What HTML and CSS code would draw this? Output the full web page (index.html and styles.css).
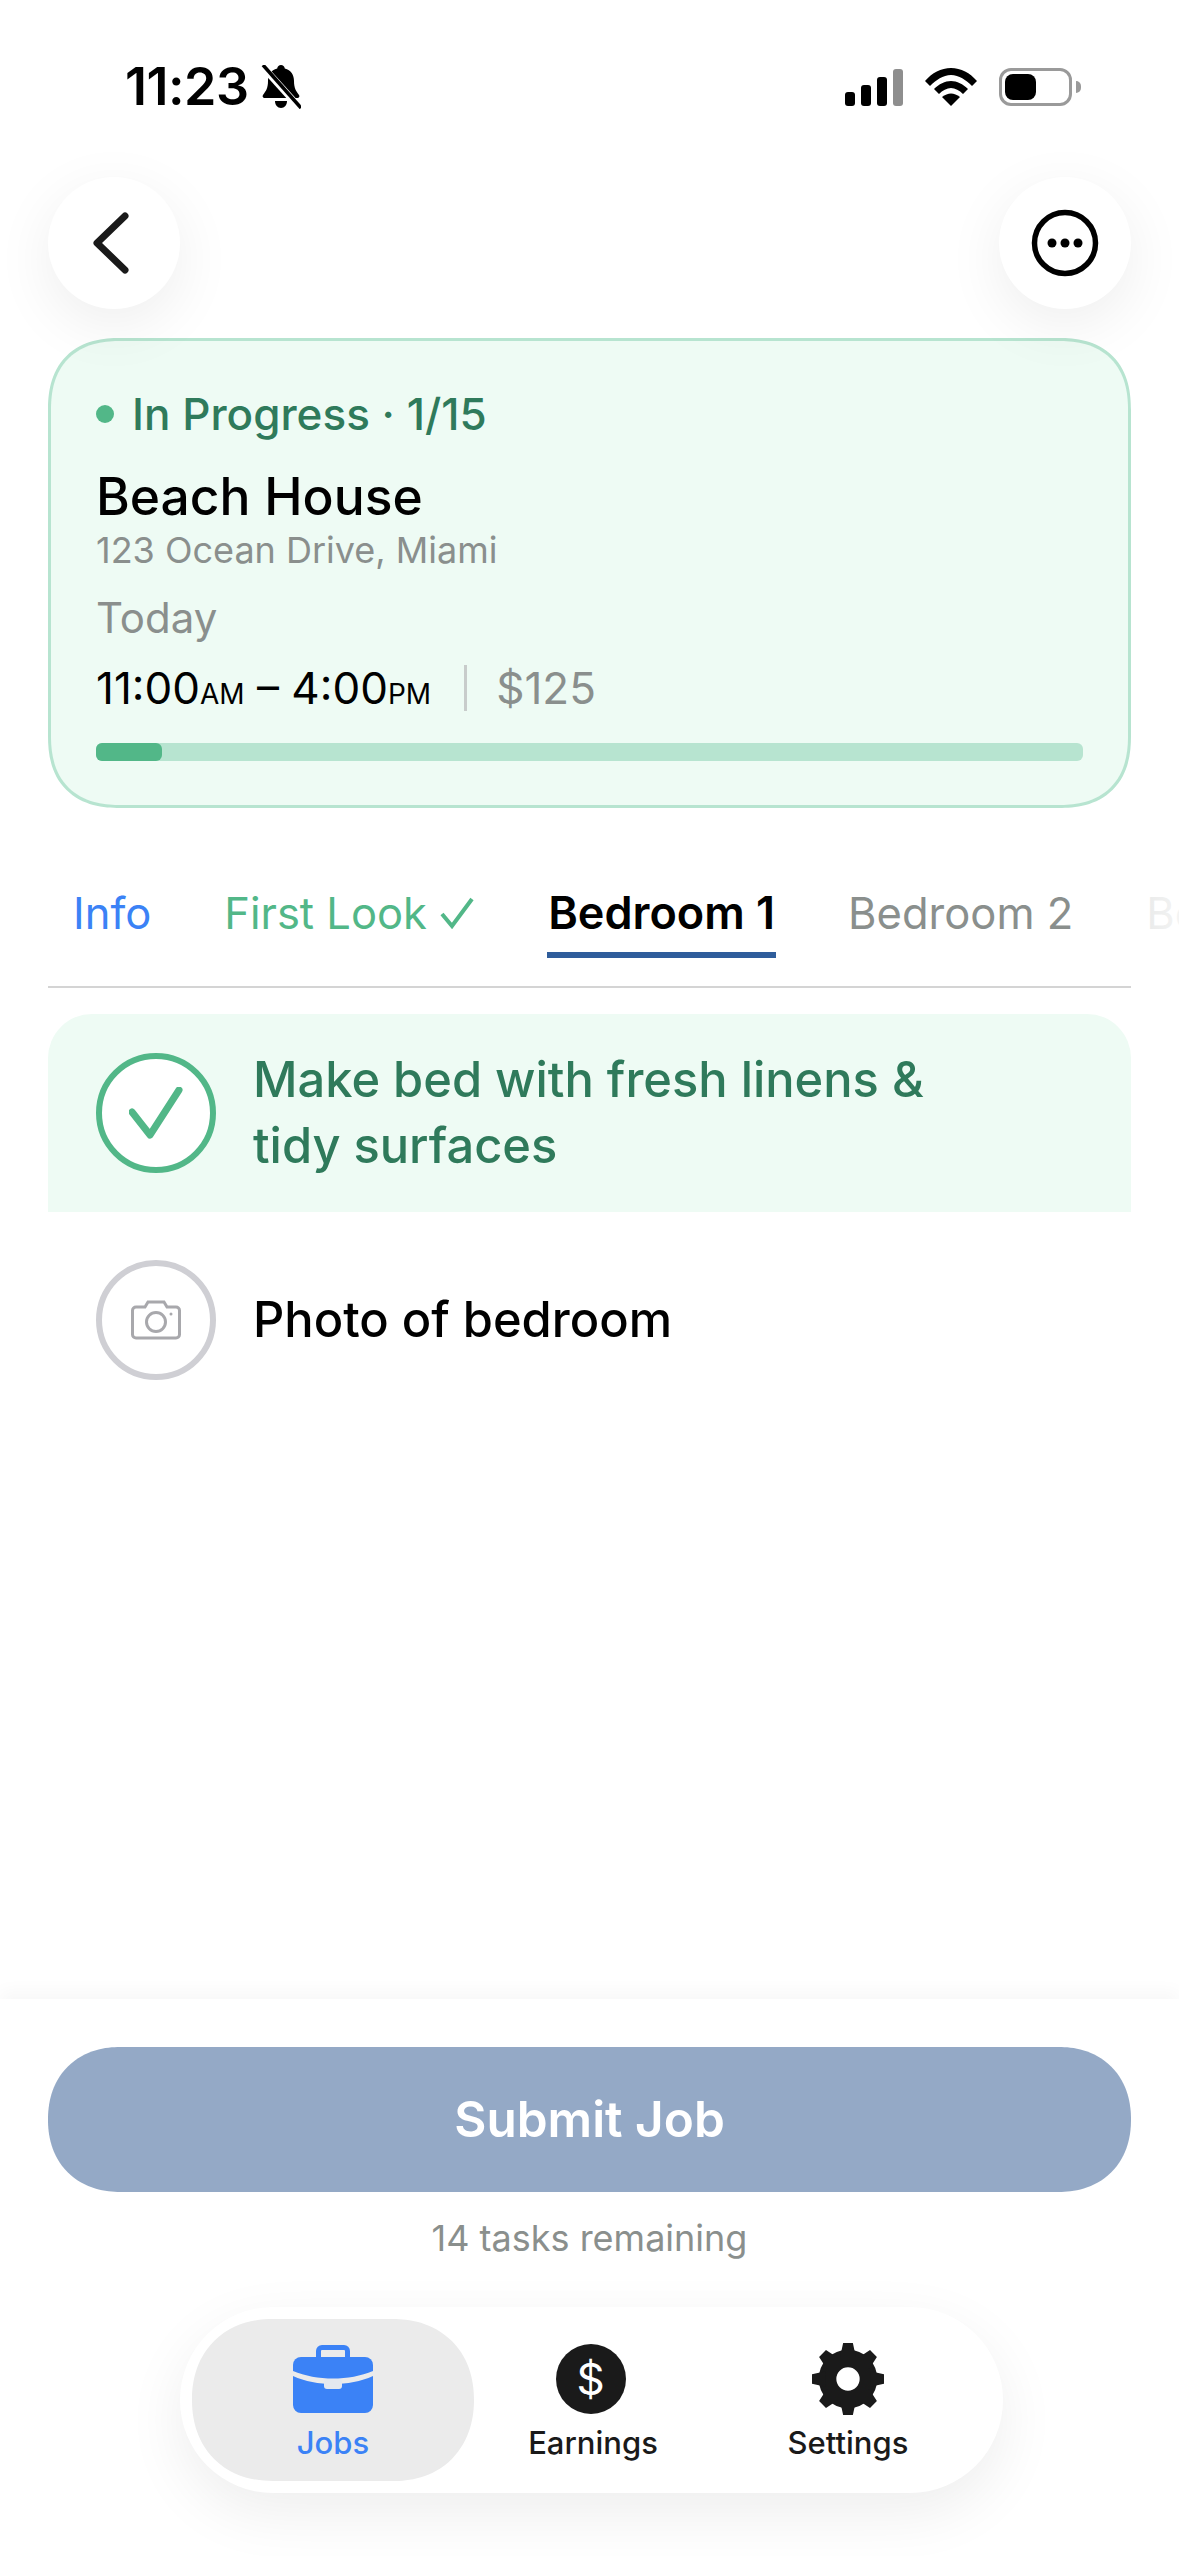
FILE: index.html
```html
<!DOCTYPE html>
<html lang="en">

<head>
    <meta charset="UTF-8">
    <meta name="viewport" content="width=device-width, initial-scale=1.0">
    <title>Beach House</title>
    <link rel="stylesheet" href="styles.css">
</head>

<body>
    <div class="page">

        <div class="status">
            <div class="status-left">
                <span class="clock">11:23</span>
                <svg class="bell" width="40" height="44" viewBox="0 0 40 44">
                    <path d="M20 0c2 0 3.500 1.500 3.800 3.500C30 5 33 10 33 16c0 7 2 10 5 14 1 1.500 0 3-1.500 3h-33C2 33 1 31.500 2 30c3-4 5-7 5-14C7 10 10 5 16.200 3.500 16.500 1.500 18 0 20 0z" />
                    <path d="M14 36h12c0 4-2.500 7-6 7s-6-3-6-7z" />
                    <path class="bell-gap" d="M1 1l38 42" />
                    <path class="bell-slash" d="M2 0l38 43" />
                </svg>
            </div>
            <div class="status-right">
                <div class="signal">
                    <span class="bar-1"></span>
                    <span class="bar-2"></span>
                    <span class="bar-3"></span>
                    <span class="bar-4"></span>
                </div>
                <svg width="52" height="38" viewBox="0 0 52 38">
                    <path d="M0 13C7 5 16 0 26 0s19 5 26 13l-5 5C41 12 34 7 26 7S11 12 5 18z" />
                    <path d="M9 21c5-5 11-8 17-8s12 3 17 8l-5 5c-3.500-3.500-8-6-12-6s-8.500 2.500-12 6z" />
                    <path d="M17 29c3-2 6-3.500 9-3.500s6 1.500 9 3.500l-9 9z" />
                </svg>
                <div class="battery">
                    <div class="battery-level"></div>
                </div>
            </div>
        </div>

        <div class="topbar">
            <div class="round-btn">
                <svg class="back-icon" width="38" height="62" viewBox="0 0 38 62">
                    <path class="chevron" d="M33 4L5 31l28 27" />
                </svg>
            </div>
            <div class="round-btn">
                <svg width="68" height="68" viewBox="0 0 68 68">
                    <circle class="more-ring" cx="34" cy="34" r="30.500" />
                    <circle cx="21" cy="34" r="4.500" />
                    <circle cx="34" cy="34" r="4.500" />
                    <circle cx="47" cy="34" r="4.500" />
                </svg>
            </div>
        </div>

        <div class="job-card">
            <div class="job-status"><span class="dot"></span>In Progress · 1/15</div>
            <h2 class="job-title">Beach House</h2>
            <p class="job-address">123 Ocean Drive, Miami</p>
            <p class="job-day">Today</p>
            <div class="job-time">
                <span>11:00<small>AM</small> – 4:00<small>PM</small></span>
                <span class="sep"></span>
                <span class="price">$125</span>
            </div>
            <div class="progress">
                <div class="progress-fill"></div>
            </div>
        </div>

        <div class="tabs">
            <div class="tab tab-info">Info</div>
            <div class="tab tab-done">First Look
                <svg width="36" height="32" viewBox="0 0 36 32">
                    <path class="tab-check" d="M3 17l10 12L33 2" />
                </svg>
            </div>
            <div class="tab tab-active">Bedroom 1</div>
            <div class="tab">Bedroom 2</div>
            <div class="tab">Bedroom 3</div>
            <div class="tabs-fade"></div>
        </div>
        <div class="tabs-line"></div>

        <div class="task task-done">
            <div class="task-circle">
                <svg width="54" height="52" viewBox="0 0 54 52">
                    <path d="M3 25l18 23L50 3" />
                </svg>
            </div>
            <div class="task-text">Make bed with fresh linens &amp;<br>tidy surfaces</div>
        </div>

        <div class="task">
            <div class="task-circle">
                <svg width="50" height="40" viewBox="0 0 50 40">
                    <path d="M5 7h9l3-5h16l3 5h9c2 0 3.500 1.500 3.500 3.500v24c0 2-1.500 3.500-3.500 3.500H5c-2 0-3.500-1.500-3.500-3.500v-24C1.500 8.500 3 7 5 7z" />
                    <circle cx="25" cy="22" r="9.500" />
                    <circle class="camera-dot" cx="40" cy="14" r="1.500" />
                </svg>
            </div>
            <div class="task-text">Photo of bedroom</div>
        </div>

        <div class="footer">
            <div class="submit">Submit Job</div>
            <p class="remaining">14 tasks remaining</p>
            <div class="nav">
                <div class="nav-item nav-active">
                    <div class="nav-icon">
                        <svg width="80" height="68" viewBox="0 0 80 68">
                            <path class="case-handle" d="M25.500 14V6A3.500 3.500 0 0 1 29 2.500h22A3.500 3.500 0 0 1 54.500 6v8" />
                            <path d="M0 20a8 8 0 0 1 8-8h64a8 8 0 0 1 8 8v6C68 31 54 33.500 40 33.500S12 31 0 26z" />
                            <path d="M0 31C12 36.500 26 39 40 39s28-2.500 40-8v29a8 8 0 0 1-8 8H8a8 8 0 0 1-8-8z" />
                            <rect class="case-clasp" x="31" y="34" width="18" height="10" rx="3" />
                        </svg>
                    </div>
                    <span>Jobs</span>
                </div>
                <div class="nav-item">
                    <div class="nav-icon">
                        <div class="coin">$</div>
                    </div>
                    <span>Earnings</span>
                </div>
                <div class="nav-item">
                    <div class="nav-icon">
                        <svg width="72" height="72" viewBox="0 0 74 74">
                            <circle class="gear-ring" cx="37" cy="37" r="21" />
                            <g class="gear-teeth">
                                <path d="M32 0h10l3 14H29zM29 60h16l-3 14H32z" />
                                <path d="M32 0h10l3 14H29zM29 60h16l-3 14H32z" transform="rotate(45 37 37)" />
                                <path d="M32 0h10l3 14H29zM29 60h16l-3 14H32z" transform="rotate(90 37 37)" />
                                <path d="M32 0h10l3 14H29zM29 60h16l-3 14H32z" transform="rotate(135 37 37)" />
                            </g>
                        </svg>
                    </div>
                    <span>Settings</span>
                </div>
            </div>
        </div>

    </div>
</body>

</html>
```

FILE: styles.css
```css
* {
    margin: 0;
    padding: 0;
    box-sizing: border-box;
}

body {
    font-family: Inter, "Noto Sans", sans-serif;
    background: #fff;
    color: #000;
}

.page {
    width: 1179px;
    height: 2556px;
    display: flex;
    flex-direction: column;
    overflow: hidden;
}

/* status bar */
.status {
    height: 177px;
    padding: 0 107px 3px 125px;
    display: flex;
    justify-content: space-between;
    align-items: center;
    flex-shrink: 0;
}

.status-left {
    display: flex;
    align-items: center;
    gap: 12px;
}

.clock {
    font-size: 52px;
    font-weight: 600;
    line-height: 60px;
    letter-spacing: -0.5px;
}

.bell-gap {
    stroke: #fff;
    stroke-width: 7;
}

.bell-slash {
    stroke: #000;
    stroke-width: 3.500;
}

.status-right {
    display: flex;
    align-items: center;
    gap: 22px;
}

.signal {
    display: flex;
    align-items: flex-end;
    gap: 6px;
    height: 37px;
}

.signal span {
    width: 10px;
    border-radius: 3px;
    background: #000;
}

.bar-1 {
    height: 14px;
}

.bar-2 {
    height: 21px;
}

.bar-3 {
    height: 29px;
}

.signal .bar-4 {
    height: 37px;
    background: #8e8e8e;
}

.battery {
    width: 73px;
    height: 38px;
    border: 3px solid #9a9a9a;
    border-radius: 12px;
    padding: 3px;
    position: relative;
}

.battery::after {
    content: "";
    position: absolute;
    right: -12px;
    top: 10px;
    width: 5px;
    height: 12px;
    background: #9a9a9a;
    border-radius: 0 6px 6px 0;
}

.battery-level {
    width: 31px;
    height: 26px;
    background: #000;
    border-radius: 8px;
}

/* back and more */
.topbar {
    position: relative;
    z-index: 1;
    padding: 0 48px;
    display: flex;
    justify-content: space-between;
    flex-shrink: 0;
}

.round-btn {
    width: 132px;
    height: 132px;
    border-radius: 50%;
    background: #fff;
    box-shadow: 0 16px 60px rgba(0, 0, 0, 0.07);
    display: flex;
    justify-content: center;
    align-items: center;
}

.back-icon {
    margin-right: 7px;
}

.chevron {
    fill: none;
    stroke: #1a1a1a;
    stroke-width: 7;
    stroke-linecap: round;
    stroke-linejoin: round;
}

.more-ring {
    fill: none;
    stroke: #000;
    stroke-width: 5.500;
}

/* job card */
.job-card {
    margin: 29px 48px 0;
    height: 470px;
    padding: 43px 45px 0;
    background: #eefbf4;
    border: 3px solid #b7e4d0;
    border-radius: 72px;
    corner-shape: superellipse(1.25);
    flex-shrink: 0;
}

.job-status {
    display: flex;
    align-items: center;
    gap: 18px;
    font-size: 44px;
    font-weight: 500;
    line-height: 60px;
    color: #2f7a5b;
}

.dot {
    width: 18px;
    height: 18px;
    border-radius: 50%;
    background: #52b788;
}

.job-title {
    margin-top: 22px;
    font-size: 51.500px;
    font-weight: 500;
    line-height: 60px;
}

.job-address {
    margin-top: 2px;
    font-size: 36px;
    line-height: 44px;
    color: #8a8f8d;
}

.job-day {
    margin-top: 21px;
    font-size: 42px;
    line-height: 50px;
    color: #8a8f8d;
}

.job-time {
    margin-top: 20px;
    display: flex;
    align-items: center;
    font-size: 44px;
    line-height: 50px;
}

.job-time small {
    font-size: 28px;
    line-height: 1;
}

.sep {
    width: 3px;
    height: 46px;
    margin: 0 29px 0 33px;
    background: #c8cccb;
}

.price {
    color: #8a8f8d;
}

.progress {
    margin-top: 30px;
    height: 18px;
    border-radius: 6px;
    background: #b7e4d0;
}

.progress-fill {
    width: 66px;
    height: 18px;
    border-radius: 6px;
    background: #52b788;
}

/* tabs */
.tabs {
    position: relative;
    margin: 75px 0 0 48px;
    padding-left: 24px;
    height: 103px;
    display: flex;
    align-items: flex-start;
    gap: 71px;
    overflow: hidden;
    flex-shrink: 0;
}

.tab {
    height: 75px;
    padding: 0 1px;
    font-size: 43.500px;
    line-height: 60px;
    color: #8a8f8d;
    white-space: nowrap;
    flex-shrink: 0;
}

.tab-info {
    color: #3b82f6;
}

.tab-done {
    color: #52b788;
}

.tab-check {
    fill: none;
    stroke: #52b788;
    stroke-width: 4;
}

.tab-active {
    color: #000;
    font-size: 45px;
    font-weight: 600;
    border-bottom: 6px solid #2f5d9b;
}

.tabs-fade {
    position: absolute;
    top: 0;
    right: 0;
    width: 80px;
    height: 75px;
    background: linear-gradient(to right, rgba(255, 255, 255, 0.7), rgba(255, 255, 255, 0.9));
}

.tabs-line {
    margin: 0 48px;
    height: 2px;
    background: #d4d4d4;
    flex-shrink: 0;
}

/* tasks */
.task {
    margin: 0 48px;
    padding: 48px 48px;
    display: flex;
    align-items: center;
    gap: 37px;
    flex-shrink: 0;
}

.task-done {
    margin-top: 26px;
    padding: 33px 48px;
    background: #eefbf4;
    border-radius: 44px 44px 0 0;
}

.task-circle {
    width: 120px;
    height: 120px;
    border: 6px solid #cfcfd4;
    border-radius: 50%;
    background: #fff;
    display: flex;
    justify-content: center;
    align-items: center;
    flex-shrink: 0;
}

.task-circle svg {
    fill: none;
    stroke: #a8a8ac;
    stroke-width: 3;
}

.task-circle .camera-dot {
    fill: #a8a8ac;
    stroke: none;
}

.task-done .task-circle {
    border-color: #52b788;
}

.task-done .task-circle svg {
    stroke: #52b788;
    stroke-width: 7;
    stroke-linecap: round;
    stroke-linejoin: round;
}

.task-text {
    font-size: 48.800px;
    font-weight: 500;
    line-height: 66px;
}

.task-done .task-text {
    color: #2f7a5b;
}

/* footer */
.footer {
    margin-top: auto;
    height: 557px;
    padding: 48px 48px 0;
    background: #fff;
    box-shadow: 0 -8px 16px rgba(0, 0, 0, 0.03);
    flex-shrink: 0;
}

.submit {
    height: 145px;
    border-radius: 72px;
    corner-shape: superellipse(1.12);
    background: #94a9c6;
    color: #fff;
    font-size: 49.500px;
    font-weight: 600;
    line-height: 145px;
    text-align: center;
}

.remaining {
    margin-top: 24px;
    font-size: 36px;
    line-height: 44px;
    color: #8a8f8d;
    text-align: center;
}

.nav {
    width: 823px;
    height: 186px;
    margin: 47px 0 0 132px;
    padding: 12px;
    display: grid;
    grid-template-columns: 282px 238px 272px;
    background: #fff;
    border-radius: 93px;
    box-shadow: 0 20px 60px rgba(0, 0, 0, 0.07);
}

.nav-item {
    height: 162px;
    padding-top: 25px;
    display: flex;
    flex-direction: column;
    align-items: center;
    font-size: 31px;
    font-weight: 500;
    line-height: 36px;
    color: #1a1a1a;
}

.nav-active {
    background: #ebebeb;
    border-radius: 81px;
    corner-shape: superellipse(1.12);
    color: #3b82f6;
}

.nav-icon {
    height: 70px;
    margin-bottom: 11px;
    display: flex;
    align-items: center;
    justify-content: center;
}

.nav-active svg {
    fill: #3b82f6;
}

.case-handle {
    fill: none;
    stroke: #3b82f6;
    stroke-width: 5;
}

.nav-active .case-clasp {
    fill: #e4e8ef;
}

.coin {
    width: 70px;
    height: 70px;
    margin-right: 5px;
    border-radius: 50%;
    background: #1a1a1a;
    color: #fff;
    font-size: 44px;
    font-weight: 400;
    line-height: 70px;
    text-align: center;
}

.gear-ring {
    fill: none;
    stroke: #1a1a1a;
    stroke-width: 18;
}

.gear-teeth {
    fill: #1a1a1a;
}
```
